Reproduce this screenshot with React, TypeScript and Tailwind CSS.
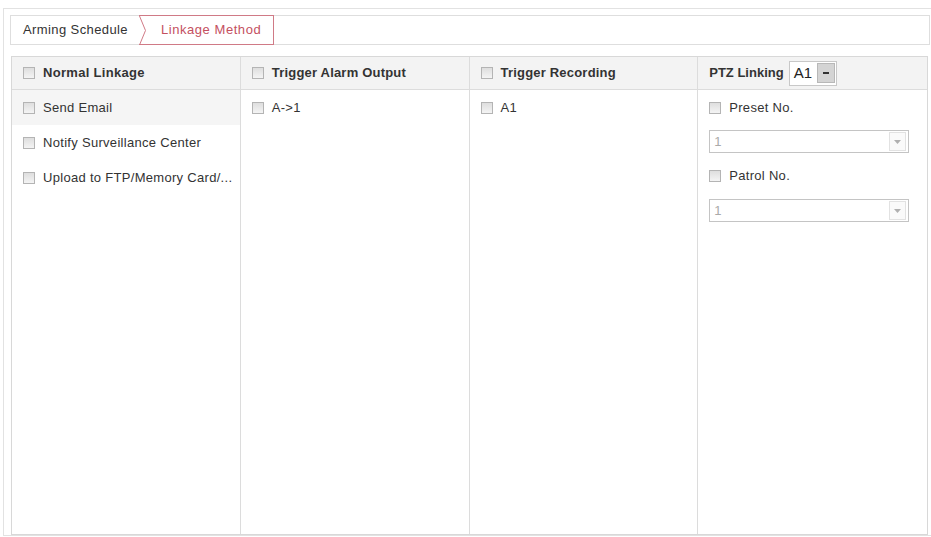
import React from "react";

const FONT = { fontFamily: "'Liberation Sans', Arial, sans-serif" };

function Check() {
  return (
    <span className="inline-block w-[12px] h-[12px] border border-[#b4b4b4] bg-gradient-to-b from-[#dedede] to-[#f4f4f4] shrink-0" />
  );
}

function Row({ label, hl }: { label: string; hl?: boolean }) {
  return (
    <div className={`flex items-center gap-[8px] h-[35px] pl-[11px] ${hl ? "bg-[#f5f5f5]" : ""}`}>
      <Check />
      <span className="text-[13px] tracking-[0.3px] text-[#333]">{label}</span>
    </div>
  );
}

function Header({ children }: { children: React.ReactNode }) {
  return (
    <div className="flex items-center gap-[8px] h-[33px] pl-[11px] bg-[#f3f3f3] border-b border-[#dcdcdc]">
      {children}
    </div>
  );
}

function SelectBox() {
  return (
    <div className="flex items-center ml-[11px] w-[200px] h-[23px] border border-[#c4c4c4] bg-white">
      <span className="flex-1 pl-[4px] text-[13px] text-[#aaa]">1</span>
      <span className="flex items-center justify-center w-[17px] h-[19px] mr-[2px] border border-[#e2e2e2] bg-[#fafafa]">
        <svg width="7" height="4" viewBox="0 0 7 4">
          <path d="M0 0 L7 0 L3.5 4 Z" fill="#b0b0b0" />
        </svg>
      </span>
    </div>
  );
}

export default function App() {
  return (
    <div className="w-[931px] h-[537px] overflow-hidden bg-white pl-[3px] pt-[8px]" style={FONT}>
      <div className="w-[932px] h-[528px] border-l border-t border-b border-[#e2e2e2] pl-[6px] pt-[6px]">
        {/* Tabs */}
        <div className="flex items-stretch w-[920px] h-[30px] border border-[#dedede]">
          <div className="flex items-center pl-[12px] pr-[11px] text-[13px] tracking-[0.4px] text-[#333]">
            Arming Schedule
          </div>
          <div className="flex items-center -my-px border-t border-r border-b border-[#d07a86] pr-[12px]">
            <svg width="8" height="29" viewBox="0 0 8 29" className="shrink-0">
              <polyline points="0.5,0 6.5,14.5 0.5,29" fill="none" stroke="#d07a86" strokeWidth="1" />
            </svg>
            <span className="ml-[14px] text-[13px] tracking-[0.55px] text-[#c4505f]">Linkage Method</span>
          </div>
        </div>

        {/* Linkage table */}
        <div className="mt-[11px] ml-[1px] w-[917px] h-[479px] border border-[#d8d8d8] grid grid-cols-4">
          <div className="border-r border-[#dcdcdc]">
            <Header>
              <Check />
              <span className="text-[13px] font-bold tracking-[0.3px] text-[#333]">Normal Linkage</span>
            </Header>
            <Row label="Send Email" hl />
            <Row label="Notify Surveillance Center" />
            <Row label="Upload to FTP/Memory Card/..." />
          </div>
          <div className="border-r border-[#dcdcdc]">
            <Header>
              <Check />
              <span className="text-[13px] font-bold tracking-[0.2px] text-[#333]">Trigger Alarm Output</span>
            </Header>
            <Row label="A->1" />
          </div>
          <div className="border-r border-[#dcdcdc]">
            <Header>
              <Check />
              <span className="text-[13px] font-bold tracking-[0.2px] text-[#333]">Trigger Recording</span>
            </Header>
            <Row label="A1" />
          </div>
          <div>
            <Header>
              <span className="text-[13px] font-bold text-[#333]">PTZ Linking</span>
              <div className="flex items-center w-[48px] h-[25px] border border-[#c8c8c8] bg-white ml-[-3px]">
                <span className="flex-1 pl-[4px] text-[15px] text-[#222]">A1</span>
                <span className="flex items-center justify-center w-[18px] h-[20px] mr-[1px] bg-[#d4d4d4] border border-[#b8b8b8]">
                  <span className="block w-[6px] h-[2px] bg-[#333]" />
                </span>
              </div>
            </Header>
            <Row label="Preset No." />
            <div className="mt-[5px]">
              <SelectBox />
            </div>
            <div className="mt-[5px]">
              <Row label="Patrol No." />
            </div>
            <div className="mt-[6px]">
              <SelectBox />
            </div>
          </div>
        </div>
      </div>
    </div>
  );
}
